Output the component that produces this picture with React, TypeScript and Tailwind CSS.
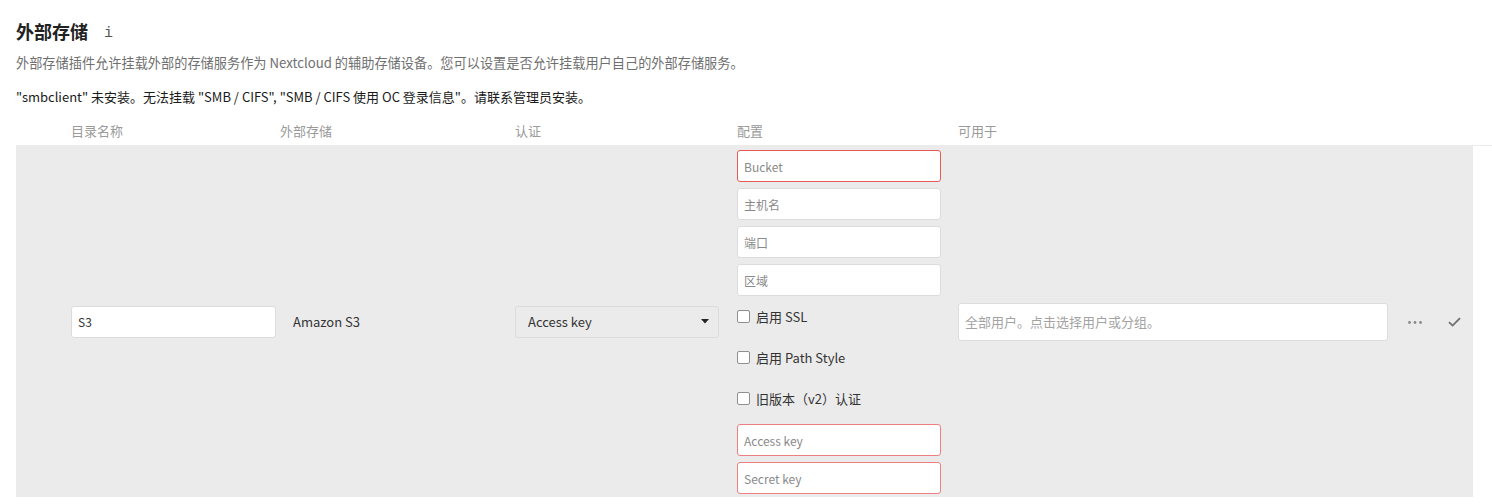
const font = "font-['Noto_Sans_CJK_SC','Noto_Sans',sans-serif]";

function TextInput({
  placeholder,
  value,
  error,
  className = "",
}: {
  placeholder?: string;
  value?: string;
  error?: "strong" | "soft";
  className?: string;
}) {
  const border =
    error === "strong"
      ? "border-[#e85a58]"
      : error === "soft"
        ? "border-[#ee8080]"
        : "border-[#dcdcdc]";
  return (
    <input
      readOnly
      value={value}
      placeholder={placeholder}
      className={`block h-[32px] w-[204px] rounded-[3px] border bg-white px-[6px] text-[12px] text-[#333] outline-none placeholder:text-[#8a8a8a] ${border} ${className}`}
    />
  );
}

function Checkbox({ label }: { label: string }) {
  return (
    <label className="flex h-[41px] items-center gap-[6px] text-[13px] text-[#333]">
      <span className="h-[13px] w-[13px] rounded-[2px] border border-[#8f8f8f] bg-white" />
      {label}
    </label>
  );
}

export default function App() {
  return (
    <div className={`${font} min-h-[504px] bg-white pl-4 text-[#333]`}>
      {/* header */}
      <h2 className="flex h-[43px] items-start gap-[16px] pt-[19px] text-[18px] font-bold leading-[24px] text-[#222]">
        外部存储
        <span className="translate-y-[3px] font-['Liberation_Mono',monospace] text-[15px] font-normal text-[#555]">i</span>
      </h2>
      <p className="mt-[10px] text-[13.2px] leading-[20px] text-[#6f6f6f]">
        外部存储插件允许挂载外部的存储服务作为 Nextcloud 的辅助存储设备。您可以设置是否允许挂载用户自己的外部存储服务。
      </p>
      <p className="mt-[14px] text-[13px] leading-[20px] text-[#1a1a1a]">
        "smbclient" 未安装。无法挂载 "SMB / CIFS", "SMB / CIFS 使用 OC 登录信息"。请联系管理员安装。
      </p>

      {/* table head */}
      <div className="mt-[9px] grid h-[30px] grid-cols-[55px_209px_235px_222px_221px_442px_73px] items-center border-b border-[#ececec] text-[13px] text-[#9a9a9a]">
        <span />
        <span>目录名称</span>
        <span>外部存储</span>
        <span>认证</span>
        <span>配置</span>
        <span>可用于</span>
        <span />
      </div>

      {/* row */}
      <div className="grid w-[1457px] grid-cols-[55px_209px_235px_222px_221px_442px_73px] items-center bg-[#ebebeb]">
        <span />
        <div>
          <TextInput value="S3" className="w-[205px] text-[12px]" />
        </div>
        <div className="pl-[13px] text-[13px] text-[#333]">Amazon S3</div>
        <div>
          <div className="flex h-[32px] w-[204px] items-center justify-between rounded-[3px] border border-[#dcdcdc] bg-[#ebebeb] pl-[12px] pr-[9px] text-[13px] text-[#333]">
            Access key
            <svg width="8" height="5" viewBox="0 0 8 5">
              <path d="M0 0h8L4 4.5z" fill="#222" />
            </svg>
          </div>
        </div>
        <div className="pt-[1px] pb-[3px]">
          <div className="flex flex-col gap-[6px] pt-[3px]">
            <TextInput placeholder="Bucket" error="strong" />
            <TextInput placeholder="主机名" />
            <TextInput placeholder="端口" />
            <TextInput placeholder="区域" />
          </div>
          <div className="flex flex-col">
            <Checkbox label="启用 SSL" />
            <Checkbox label="启用 Path Style" />
            <Checkbox label="旧版本（v2）认证" />
          </div>
          <TextInput placeholder="Access key" error="soft" className="mt-[5px]" />
          <TextInput placeholder="Secret key" error="soft" className="mt-[6px]" />
        </div>
        <div>
          <input
            readOnly
            placeholder="全部用户。点击选择用户或分组。"
            className="block h-[38px] w-[430px] rounded-[3px] border border-[#dcdcdc] bg-white px-[6px] text-[13px] outline-none placeholder:text-[#a3a3a3]"
          />
        </div>
        <div className="flex items-center pl-[8px]">
          <svg width="14" height="3" viewBox="0 0 14 3" className="mt-[2px]">
            <circle cx="1.5" cy="1.5" r="1.4" fill="#8a8a8a" />
            <circle cx="7" cy="1.5" r="1.4" fill="#8a8a8a" />
            <circle cx="12.5" cy="1.5" r="1.4" fill="#8a8a8a" />
          </svg>
          <svg width="13" height="10" viewBox="0 0 13 10" className="ml-[26px]">
            <path d="M1 5.2l3.6 3.4L12 1.2" fill="none" stroke="#6e6e6e" strokeWidth="1.8" />
          </svg>
        </div>
      </div>
    </div>
  );
}
